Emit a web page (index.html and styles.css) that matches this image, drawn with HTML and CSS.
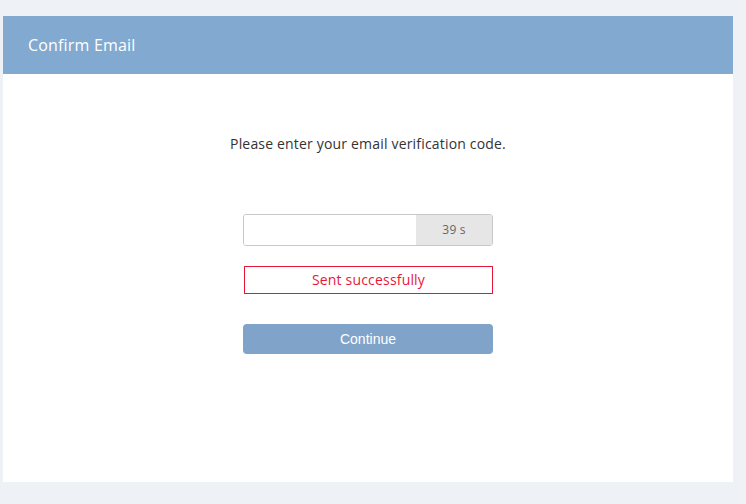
FILE: index.html
```html
<!DOCTYPE html>
<html lang="en">
<head>
  <meta charset="UTF-8">
  <meta name="viewport" content="width=device-width, initial-scale=1.0">
  <title>Confirm Email</title>
  <link rel="stylesheet" href="styles.css">
</head>
<body>
  <div class="panel">
    <div class="panel-header">Confirm Email</div>
    <div class="panel-body">
      <p class="hint">Please enter your email verification code.</p>
      <div class="input-group">
        <input type="text" class="code-input">
        <span class="countdown">39 s</span>
      </div>
      <div class="message">Sent successfully</div>
      <button type="button" class="continue-button">Continue</button>
    </div>
  </div>
</body>
</html>
```

FILE: styles.css
```css
body {
  margin: 0;
  padding: 16px 13px 22px 3px;
  background-color: #eef2f6;
  font-family: "Open Sans", "Noto Sans", sans-serif;
  letter-spacing: 0.18px;
}
.panel {
  background-color: white;
  height: 466px;
}
.panel-header {
  height: 58px;
  line-height: 58px;
  padding-left: 25px;
  background-color: #82a9d0;
  color: white;
  font-size: 16px;
}
.panel-body {
  display: flex;
  flex-direction: column;
  align-items: center;
  padding-top: 60px;
}
.hint {
  margin: 0 0 60px;
  font-size: 14px;
  line-height: 20px;
  color: #333;
}
.input-group {
  display: flex;
  width: 250px;
  height: 32px;
  box-sizing: border-box;
  border: 1px solid #c8c8c8;
  border-radius: 3px;
  overflow: hidden;
}
.code-input {
  flex: 1;
  min-width: 0;
  border: none;
  outline: none;
  padding: 0 8px;
  font-size: 13px;
}
.countdown {
  width: 76px;
  background-color: #e6e6e6;
  color: #666;
  font-size: 12px;
  line-height: 30px;
  text-align: center;
}
.message {
  width: 249px;
  height: 28px;
  box-sizing: border-box;
  margin: 20px 0 30px 1px;
  border: 1px solid #e8173a;
  color: #e8173a;
  font-size: 14px;
  line-height: 26px;
  text-align: center;
}
.continue-button {
  width: 250px;
  height: 30px;
  border: none;
  border-radius: 4px;
  background-color: #7fa3c9;
  color: white;
  font-family: "Liberation Sans", Arial, sans-serif;
  font-size: 14px;
  letter-spacing: 0;
  cursor: pointer;
}
```
